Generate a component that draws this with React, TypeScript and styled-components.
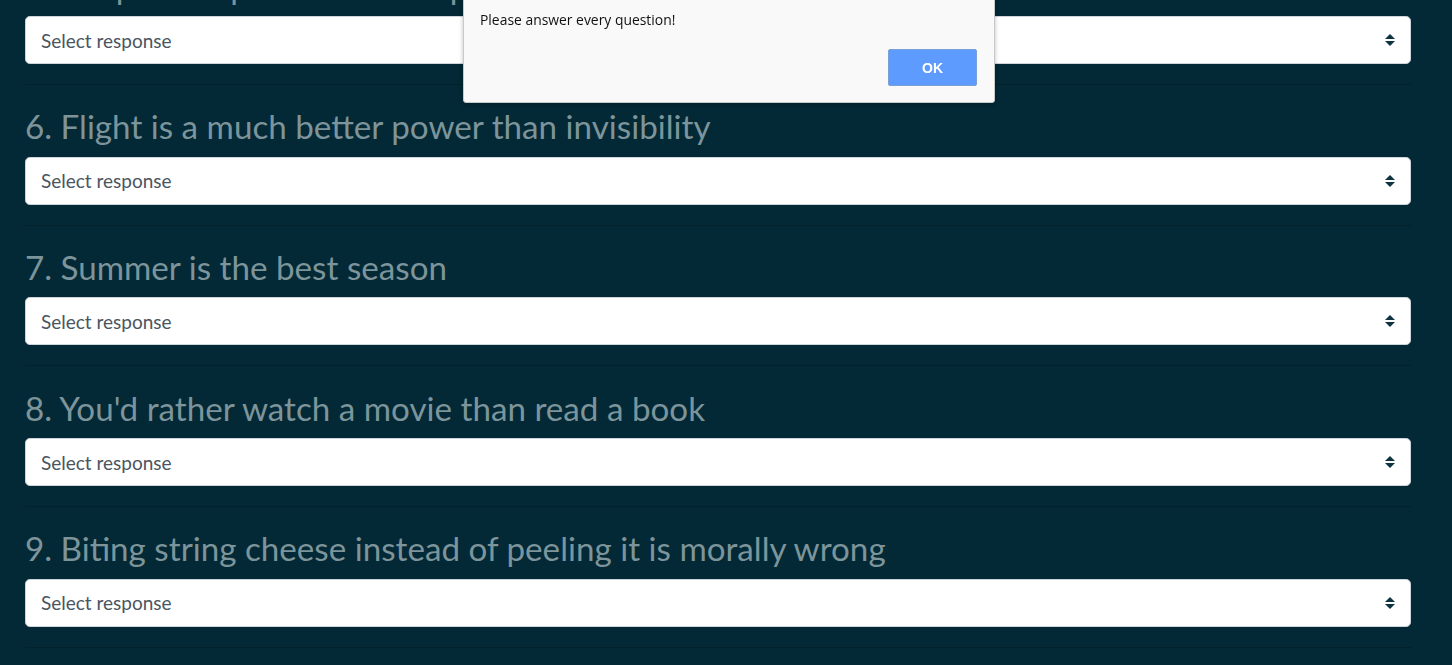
import React from "react";
import styled, { createGlobalStyle } from "styled-components";

const Global = createGlobalStyle`
  html, body { margin: 0; padding: 0; background: #022935; overflow: hidden; }
  body { font-family: Lato, "Noto Sans", sans-serif; }
`;

const Page = styled.div`
  width: 1386px;
  padding: 0 41px 0 25px;
  margin-top: -33.4px;
  display: flex;
  flex-direction: column;
`;

const Question = styled.section`
  display: flex;
  flex-direction: column;
`;

const Heading = styled.h2`
  margin: 0 0 11px;
  font-family: Lato, "Noto Sans", sans-serif;
  font-weight: 400;
  font-size: 33.2px;
  line-height: 38.4px;
  color: #7d949b;
  white-space: nowrap;
`;

const SelectWrap = styled.div`
  position: relative;
  height: 48px;
`;

const Select = styled.select`
  appearance: none;
  -webkit-appearance: none;
  box-sizing: border-box;
  width: 100%;
  height: 48px;
  padding: 0 40px 0 15px;
  border: 1px solid #ced4da;
  border-radius: 4.8px;
  background: #ffffff;
  font-family: Lato, "Noto Sans", sans-serif;
  font-size: 19px;
  color: #4a5561;
  outline: none;
`;

const Arrow = styled.svg`
  position: absolute;
  right: 16px;
  top: 18px;
  pointer-events: none;
`;

const Rule = styled.hr`
  margin: 20px 0 22.27px;
  border: 0;
  border-top: 1px solid rgba(0, 0, 0, 0.18);
  height: 0;
`;

const Overlay = styled.div`
  position: fixed;
  left: 463px;
  top: -10px;
  width: 532px;
  height: 113px;
  box-sizing: border-box;
  background: #f9f9f9;
  border: 1px solid #c9c9c9;
  border-radius: 0 0 3px 3px;
  box-shadow: 0 1px 4px rgba(0, 0, 0, 0.25);
  display: flex;
  flex-direction: column;
  padding: 19px 17px 0 16px;
`;

const Message = styled.p`
  margin: 0;
  font-family: "Open Sans", "Liberation Sans", sans-serif;
  font-size: 13.9px;
  line-height: 20px;
  color: #111;
`;

const Actions = styled.div`
  display: flex;
  justify-content: flex-end;
  margin-top: 19px;
`;

const OkButton = styled.button`
  width: 89px;
  height: 37px;
  box-sizing: border-box;
  background: #5e9bff;
  border: 1px solid #7b9fd8;
  border-radius: 2px;
  color: #fff;
  font-family: "Liberation Sans", Arial, sans-serif;
  font-weight: 700;
  font-size: 14px;
`;

const questions = [
  "5. Soup is the perfect lunch option",
  "6. Flight is a much better power than invisibility",
  "7. Summer is the best season",
  "8. You'd rather watch a movie than read a book",
  "9. Biting string cheese instead of peeling it is morally wrong",
];

function Caret() {
  return (
    <Arrow width="10" height="12" viewBox="0 0 10 12">
      <path d="M5 0 L10 5 L0 5 Z" fill="#0d3440" />
      <path d="M0 7 L10 7 L5 12 Z" fill="#0d3440" />
    </Arrow>
  );
}

export default function App() {
  return (
    <>
      <Global />
      <Page>
        {questions.map((q) => (
          <Question key={q}>
            <Heading>{q}</Heading>
            <SelectWrap>
              <Select defaultValue="">
                <option value="">Select response</option>
                <option>Strongly agree</option>
                <option>Agree</option>
                <option>Neutral</option>
                <option>Disagree</option>
                <option>Strongly disagree</option>
              </Select>
              <Caret />
            </SelectWrap>
            <Rule />
          </Question>
        ))}
      </Page>
      <Overlay>
        <Message>Please answer every question!</Message>
        <Actions>
          <OkButton>OK</OkButton>
        </Actions>
      </Overlay>
    </>
  );
}
